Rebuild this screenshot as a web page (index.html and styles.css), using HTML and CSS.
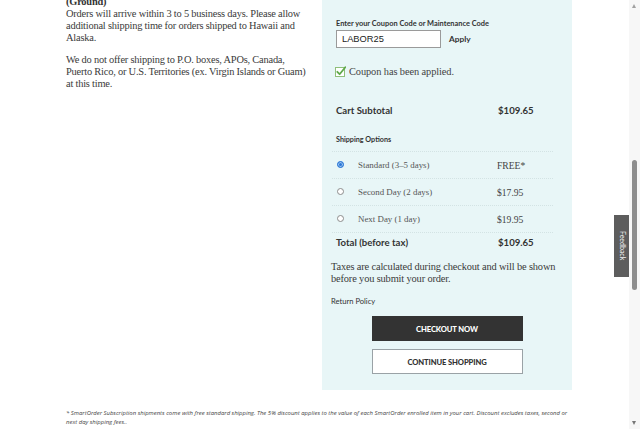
FILE: index.html
```html
<!DOCTYPE html>
<html>
<head>
<meta charset="utf-8">
<link rel="stylesheet" href="styles.css">
</head>
<body>
<div class="page">
  <div class="main">
    <div class="info">
      <p class="ship-info"><b class="ground">(Ground)</b><br>Orders will arrive within 3 to 5 business days. Please allow additional shipping time for orders shipped to Hawaii and Alaska.</p>
      <p class="ship-info">We do not offer shipping to P.O. boxes, APOs, Canada, Puerto Rico, or U.S. Territories (ex. Virgin Islands or Guam) at this time.</p>
    </div>
    <aside class="summary">
      <div class="coupon">
        <label class="coupon-label">Enter your Coupon Code or Maintenance Code</label>
        <div class="coupon-row">
          <div class="coupon-input">LABOR25</div>
          <span class="apply">Apply</span>
        </div>
        <div class="coupon-ok">
          <svg class="check" width="11" height="11" viewBox="0 0 11 11">
            <rect x="0.5" y="1.5" width="9" height="9" fill="#fff" stroke="#8fbf7a" stroke-width="1"/>
            <path d="M2.3 5.8 L4.6 8.2 L10.3 1.2" fill="none" stroke="#5fa94a" stroke-width="1.8" stroke-linecap="round" stroke-linejoin="round"/>
          </svg>
          <span>Coupon has been applied.</span>
        </div>
      </div>
      <div class="totals">
        <div class="row subtotal"><span>Cart Subtotal</span><span class="amt">$109.65</span></div>
        <div class="ship-title">Shipping Options</div>
        <div class="opt">
          <span class="radio on"></span><span class="opt-name">Standard (3–5 days)</span><span class="opt-price">FREE*</span>
        </div>
        <div class="opt">
          <span class="radio"></span><span class="opt-name">Second Day (2 days)</span><span class="opt-price">$17.95</span>
        </div>
        <div class="opt">
          <span class="radio"></span><span class="opt-name">Next Day (1 day)</span><span class="opt-price">$19.95</span>
        </div>
        <div class="row total"><span>Total (before tax)</span><span class="amt">$109.65</span></div>
      </div>
      <p class="tax-note">Taxes are calculated during checkout and will be shown before you submit your order.</p>
      <a class="return">Return Policy</a>
      <div class="buttons">
        <button class="btn btn-dark">CHECKOUT NOW</button>
        <button class="btn btn-light">CONTINUE SHOPPING</button>
      </div>
    </aside>
  </div>
  <p class="footnote">* SmartOrder Subscription shipments come with free standard shipping. The 5% discount applies to the value of each SmartOrder enrolled item in your cart. Discount excludes taxes, second or next day shipping fees..</p>
</div>
<div class="feedback">Feedback</div>
<div class="scrollbar">
  <span class="arrow up"></span>
  <span class="thumb"></span>
  <span class="arrow down"></span>
</div>
</body>
</html>
```
FILE: styles.css
```css
html, body {
  margin: 0;
  padding: 0;
  overflow: hidden;
  background: #fff;
}
body {
  width: 640px;
  height: 429px;
  font-family: "Liberation Serif", serif;
  color: #333;
}
.page {
  padding-left: 66px;
  width: 520px;
}
.main {
  display: grid;
  grid-template-columns: 244px 250px;
  column-gap: 12px;
  align-items: start;
}
.info {
  margin-top: -4px;
}
.ship-info {
  margin: 0 0 10px;
  font-size: 10.4px;
  letter-spacing: -0.2px;
  line-height: 12px;
  color: #3a3a3a;
}
.ship-info .ground { color: #333; }
.ship-info:first-child { margin-top: 0; }

.summary {
  background: #e8f6f7;
  padding: 19px 9px 17px 9px;
  height: 354px;
}
.coupon { padding-left: 5px; }
.coupon-label {
  display: block;
  font-family: Lato, sans-serif;
  font-weight: 700;
  font-size: 7.4px;
  color: #333;
  line-height: 10px;
}
.coupon-row {
  display: flex;
  align-items: center;
  margin-top: 1px;
}
.coupon-input {
  width: 98px;
  height: 16px;
  border: 1px solid #9a9a9a;
  background: #fff;
  font-family: "Liberation Sans", sans-serif;
  font-size: 9.3px;
  line-height: 16px;
  padding-left: 5px;
  color: #222;
}
.apply {
  margin-left: 8px;
  font-family: Lato, sans-serif;
  font-weight: 700;
  font-size: 8.3px;
  color: #333;
}
.coupon-ok {
  display: flex;
  align-items: center;
  margin-top: 18px;
  font-size: 10.4px;
  letter-spacing: -0.1px;
  color: #444;
}
.check { margin-right: 3px; margin-left: -1px; }

.totals {
  margin-top: 27px;
  padding: 0 10px 0 1px;
}
.row {
  display: flex;
  font-family: Lato, sans-serif;
  font-weight: 700;
  font-size: 9.6px;
  color: #333;
  padding-left: 4px;
}
.row span:first-child { width: 162px; }
.subtotal { height: 13px; line-height: 13px; }
.ship-title {
  font-family: Lato, sans-serif;
  font-weight: 700;
  font-size: 7.2px;
  color: #333;
  padding-left: 4px;
  margin-top: 18px;
  height: 16px;
  line-height: 10px;
  border-bottom: 1px dotted #d3e3e4;
}
.opt {
  display: flex;
  align-items: center;
  height: 26px;
  border-bottom: 1px dotted #d3e3e4;
  font-size: 8.9px;
  color: #555;
}
.radio {
  width: 5px;
  height: 5px;
  border: 1px solid #8c8c8c;
  border-radius: 50%;
  background: #fff;
  margin-left: 5px;
  margin-right: 14px;
  margin-top: -2px;
}
.radio.on {
  border-color: #2b77d6;
  background: #2b77d6;
  box-shadow: inset 0 0 0 1px #9cc4f0;
}
.opt-name { width: 139px; }
.opt-price { font-size: 9.6px; color: #444; }
.total { height: 19px; line-height: 19px; }

.tax-note {
  margin: 9px 0 0;
  font-size: 10.4px;
  letter-spacing: -0.15px;
  line-height: 12px;
  color: #3a3a3a;
}
.return {
  display: block;
  margin-top: 11px;
  font-family: Lato, sans-serif;
  font-size: 7.6px;
  color: #333;
}
.buttons {
  display: flex;
  flex-direction: column;
  align-items: center;
  gap: 8px;
  margin-top: 10px;
}
.btn {
  width: 151px;
  height: 25px;
  font-family: Lato, sans-serif;
  font-weight: 900;
  font-size: 7.6px;
  letter-spacing: -0.1px;
  border: 1px solid #333;
  padding: 0;
}
.btn-dark { background: #333; color: #fff; }
.btn-light { background: #fff; color: #333; border-color: #9aa2a6; }

.footnote {
  margin: 19px 0 0;
  font-family: "Open Sans", sans-serif;
  font-style: italic;
  font-size: 5.95px;
  line-height: 9px;
  color: #444;
  width: 505px;
}

.feedback {
  position: fixed;
  left: 614px;
  top: 215px;
  width: 18px;
  height: 62px;
  background: #5d5d5d;
  color: #f2f2f2;
  font-family: Lato, sans-serif;
  font-size: 7px;
  writing-mode: vertical-rl;
  display: flex;
  align-items: center;
  justify-content: center;
}
.scrollbar {
  position: fixed;
  right: 0;
  top: 0;
  width: 11px;
  height: 429px;
  background: #f7f7f7;
}
.thumb {
  position: absolute;
  left: 3px;
  top: 160px;
  width: 5px;
  height: 130px;
  background: #8e8e8e;
  border-radius: 3px;
}
.arrow {
  position: absolute;
  left: 3px;
  width: 0;
  height: 0;
  border-left: 2.5px solid transparent;
  border-right: 2.5px solid transparent;
}
.arrow.up { top: 4px; border-bottom: 4px solid #a0a0a0; }
.arrow.down { bottom: 4px; border-top: 4px solid #777; }
```
